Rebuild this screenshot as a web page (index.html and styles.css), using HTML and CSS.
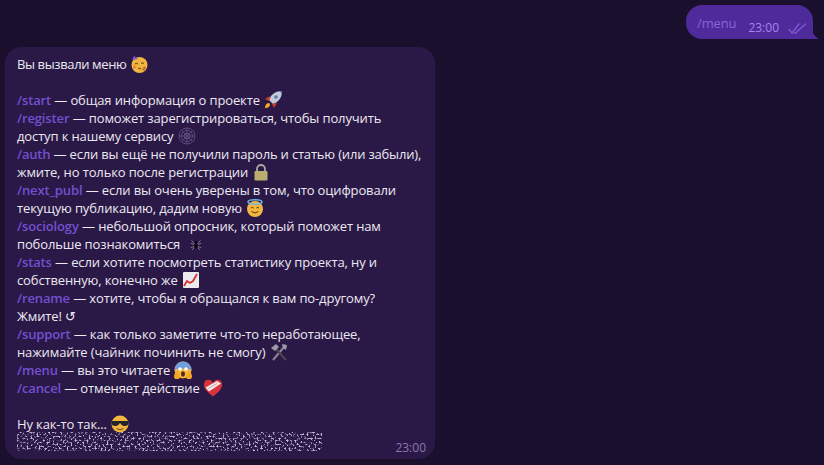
FILE: index.html
```html
<!DOCTYPE html>
<html lang="ru">
<head>
  <meta charset="UTF-8">
  <meta name="viewport" content="width=device-width, initial-scale=1.0">
  <title>Чат</title>
  <link rel="stylesheet" href="styles.css">
</head>
<body>
  <div class="chat">
    <div class="msg-out">
      <span class="msg-out-text">/menu</span>
      <span class="msg-out-time">23:00</span>
      <svg class="checks" width="19" height="11" viewBox="0 0 19 11" fill="none" stroke="#8058d8" stroke-width="1.300" stroke-linecap="round"><path d="M1 6.500l3 3.500L11 1"/><path d="M6 10h1.500L17.500 1"/></svg>
      <svg class="tail" width="8" height="9" viewBox="0 0 8 9"><path d="M0 0C1 4 3 7 7 9H0Z" fill="#4f2a9a"/></svg>
    </div>

    <div class="msg-in">
      <p class="line line-first">Вы вызвали меню <svg class="emoji" viewBox="0 0 18 18"><circle cx="9.500" cy="10" r="8" fill="#f2b63e"/><path d="M2 5l2-4 4 3z" fill="#7c5bd0"/><path d="M5 9q1.500-1.500 3 0M11 8.500q1.500-1.500 3 0" stroke="#5a3410" fill="none"/><path d="M8 13q2 1.500 3 0" stroke="#5a3410" fill="none"/><circle cx="4.500" cy="12" r="1.600" fill="#e8823c"/><circle cx="14.500" cy="13" r="1.400" fill="#c66b2a"/><path d="M12 14l4 2" stroke="#a85a20"/></svg></p>
      <p class="line">&nbsp;</p>
      <p class="line"><span class="cmd">/start</span> — общая информация о проекте <svg class="emoji" viewBox="0 0 18 18"><path d="M18 0C12 0 7 3 5 9l4 4c6-2 9-7 9-13z" fill="#c3cad6"/><circle cx="12" cy="6" r="1.800" fill="#4f7fb5"/><path d="M15 0h3v3z" fill="#4f7fb5"/><path d="M6 5L1 8l4 2zM13 12l-3 5-2-4z" fill="#d13b2f"/><path d="M5 12c-3 0-4 3-4 5 3 0 5-1 5-4z" fill="#f5a623"/></svg></p>
      <p class="line"><span class="cmd">/register</span> — поможет зарегистрироваться, чтобы получить</p>
      <p class="line">доступ к нашему сервису <svg class="emoji" viewBox="0 0 18 18" fill="none" stroke="#5c4a7c" stroke-width="1"><circle cx="9" cy="9" r="8"/><circle cx="9" cy="9" r="5.500"/><circle cx="9" cy="9" r="3"/><path d="M1 9h16M9 1v16M3.300 3.300l11.400 11.400M14.700 3.300L3.300 14.700"/></svg></p>
      <p class="line line-tight"><span class="cmd">/auth</span> — если вы ещё не получили пароль и статью (или забыли),</p>
      <p class="line">жмите, но только после регистрации <svg class="emoji" viewBox="0 0 18 18"><path d="M5 9V6a4 4 0 0 1 8 0v3" fill="none" stroke="#a9a9a0" stroke-width="1.800"/><rect x="2.500" y="8" width="13" height="9.500" rx="1" fill="#bcae6e"/></svg></p>
      <p class="line"><span class="cmd">/next_publ</span> — если вы очень уверены в том, что оцифровали</p>
      <p class="line">текущую публикацию, дадим новую <svg class="emoji" viewBox="0 0 18 18"><circle cx="9" cy="10" r="8" fill="#f2b63e"/><ellipse cx="9" cy="3" rx="7" ry="2.200" fill="none" stroke="#6fb8ea" stroke-width="1.600"/><path d="M5 9q1.300-1.300 2.600 0M10.400 9q1.300-1.300 2.600 0" stroke="#5a3410" fill="none"/><path d="M5.500 12.500q3.500 3 7 0" stroke="#5a3410" fill="none"/></svg></p>
      <p class="line"><span class="cmd">/sociology</span> — небольшой опросник, который поможет нам</p>
      <p class="line">побольше познакомиться <svg class="emoji emoji-gap" viewBox="-3 -3 24 24" fill="none"><path d="M7 9L3 4M7 10L2 8M7 12l-5 2M7 13l-3 4M11 9l4-5M11 10l5-2M11 12l5 2M11 13l3 4" stroke="#8a8294" stroke-width="1.100"/><ellipse cx="9" cy="11.500" rx="2.500" ry="3.500" fill="#0c0812"/><circle cx="9" cy="6.500" r="2" fill="#0c0812"/></svg></p>
      <p class="line"><span class="cmd">/stats</span> — если хотите посмотреть статистику проекта, ну и</p>
      <p class="line">собственную, конечно же <svg class="emoji" viewBox="0 0 18 18"><rect x="1" y="1" width="16" height="16" rx="1" fill="#eceaee"/><path d="M2 15l3-5 3 2 3-2 4-7" fill="none" stroke="#d2332b" stroke-width="1.800"/></svg></p>
      <p class="line"><span class="cmd">/rename</span> — хотите, чтобы я обращался к вам по-другому?</p>
      <p class="line">Жмите! <span class="redo">↺</span></p>
      <p class="line"><span class="cmd">/support</span> — как только заметите что-то неработающее,</p>
      <p class="line">нажимайте (чайник починить не смогу) <svg class="emoji" viewBox="0 0 18 18" fill="none" stroke-width="2"><path d="M3 17L14 4" stroke="#8c8794"/><path d="M16 17L5 5" stroke="#4c4754"/><path d="M1 5l5-4 3 3-4 4z" fill="#a09aa6"/><path d="M12 1l5 1-1 5-3-2z" fill="#a09aa6"/></svg></p>
      <p class="line"><span class="cmd">/menu</span> — вы это читаете <svg class="emoji" viewBox="0 0 18 18"><circle cx="9" cy="9" r="8.500" fill="#f2b63e"/><path d="M.5 9a8.500 8.500 0 0 1 17 0c-3-2-14-2-17 0z" fill="#6f9fdc"/><circle cx="6" cy="8" r="1.800" fill="#fff"/><circle cx="12" cy="8" r="1.800" fill="#fff"/><ellipse cx="9" cy="13" rx="2" ry="2.700" fill="#5a2a10"/><path d="M0 16c0-3 1-5 3-5s3 5 2 7H1zM18 16c0-3-1-5-3-5s-3 5-2 7h4z" fill="#f5a623"/></svg></p>
      <p class="line"><span class="cmd">/cancel</span> — отменяет действие <svg class="emoji" viewBox="0 0 18 18"><path d="M9 17.500C3 13 0 9.500 0 6a4.500 4.500 0 0 1 9-1.500A4.500 4.500 0 0 1 18 6c0 3.500-3 7-9 11.500z" fill="#d8323c"/><path d="M1.500 8.500L13 2l4 2.500L5 12.500z" fill="#f0e8e8"/><path d="M4 9.500l9-5" stroke="#d8a0a0" fill="none"/></svg></p>
      <p class="line">&nbsp;</p>
      <p class="line">Ну как-то так... <svg class="emoji" viewBox="0 0 18 18"><circle cx="9" cy="9" r="8.500" fill="#f2b63e"/><path d="M.5 6h17v2c0 2-2 3.500-4.500 3S10 9 9 8c-1 1-1.500 2.500-4 3S.5 10 .5 8z" fill="#24242a"/><path d="M5.500 13.500q3.500 2.500 7 0" stroke="#6a3a10" fill="none"/></svg></p>
      <svg class="spoiler" width="305" height="19"><filter id="noise" x="0" y="0" width="100%" height="100%"><feTurbulence type="fractalNoise" baseFrequency="0.5" numOctaves="3" seed="7"/><feColorMatrix values="0 0 0 0 0.55  0 0 0 0 0.47  0 0 0 0 0.68  5 0 0 0 -2.500"/><feGaussianBlur stdDeviation="0.3"/></filter><rect width="305" height="19" filter="url(#noise)"/></svg>
      <span class="msg-in-time">23:00</span>
    </div>
  </div>
</body>
</html>
```
FILE: styles.css
```css
body {
  font-family: 'Open Sans', 'Noto Sans', sans-serif;
  background: #1a0f2c;
  margin: 0;
  height: 465px;
  overflow: hidden;
  font-size: 13px;
  letter-spacing: -0.13px;
  color: #ece9f1;
}

.chat {
  display: flex;
  flex-direction: column;
  padding: 5px 11px 6px 5px;
  gap: 8px;
}

.msg-out {
  position: relative;
  align-self: flex-end;
  display: flex;
  align-items: flex-start;
  height: 34px;
  width: 127px;
  box-sizing: border-box;
  padding: 9px 6px 0 11px;
  background: #4f2a9a;
  border-radius: 16px 16px 0 16px;
}

.msg-out-text {
  color: #8a62dc;
  line-height: 18px;
}

.msg-out-time {
  margin: 6px 0 0 auto;
  font-size: 12px;
  letter-spacing: 0;
  line-height: 16px;
  color: #a585ea;
}

.checks {
  margin: 9px 0 0 9px;
}

.tail {
  position: absolute;
  right: -7px;
  bottom: 0;
}

.msg-in {
  position: relative;
  width: 430px;
  height: 412px;
  box-sizing: border-box;
  padding: 8px 12px 0;
  background: #2a1847;
  border-radius: 16px;
}

.line {
  margin: 0;
  height: 18px;
  line-height: 18px;
  white-space: nowrap;
}

.line-first {
  letter-spacing: -0.38px;
}

.line-tight {
  letter-spacing: -0.18px;
}

.cmd {
  color: #7350cf;
  font-weight: 600;
}

.emoji {
  width: 18px;
  height: 18px;
  vertical-align: -4px;
  margin-left: 1px;
}

.emoji-gap {
  margin-left: 4px;
}

.redo {
  font-family: 'DejaVu Sans', sans-serif;
}

.spoiler {
  display: block;
  margin-top: -1px;
}

.msg-in-time {
  position: absolute;
  right: 9px;
  bottom: 3px;
  font-size: 12px;
  letter-spacing: 0;
  line-height: 16px;
  color: #8c78ae;
}
```
